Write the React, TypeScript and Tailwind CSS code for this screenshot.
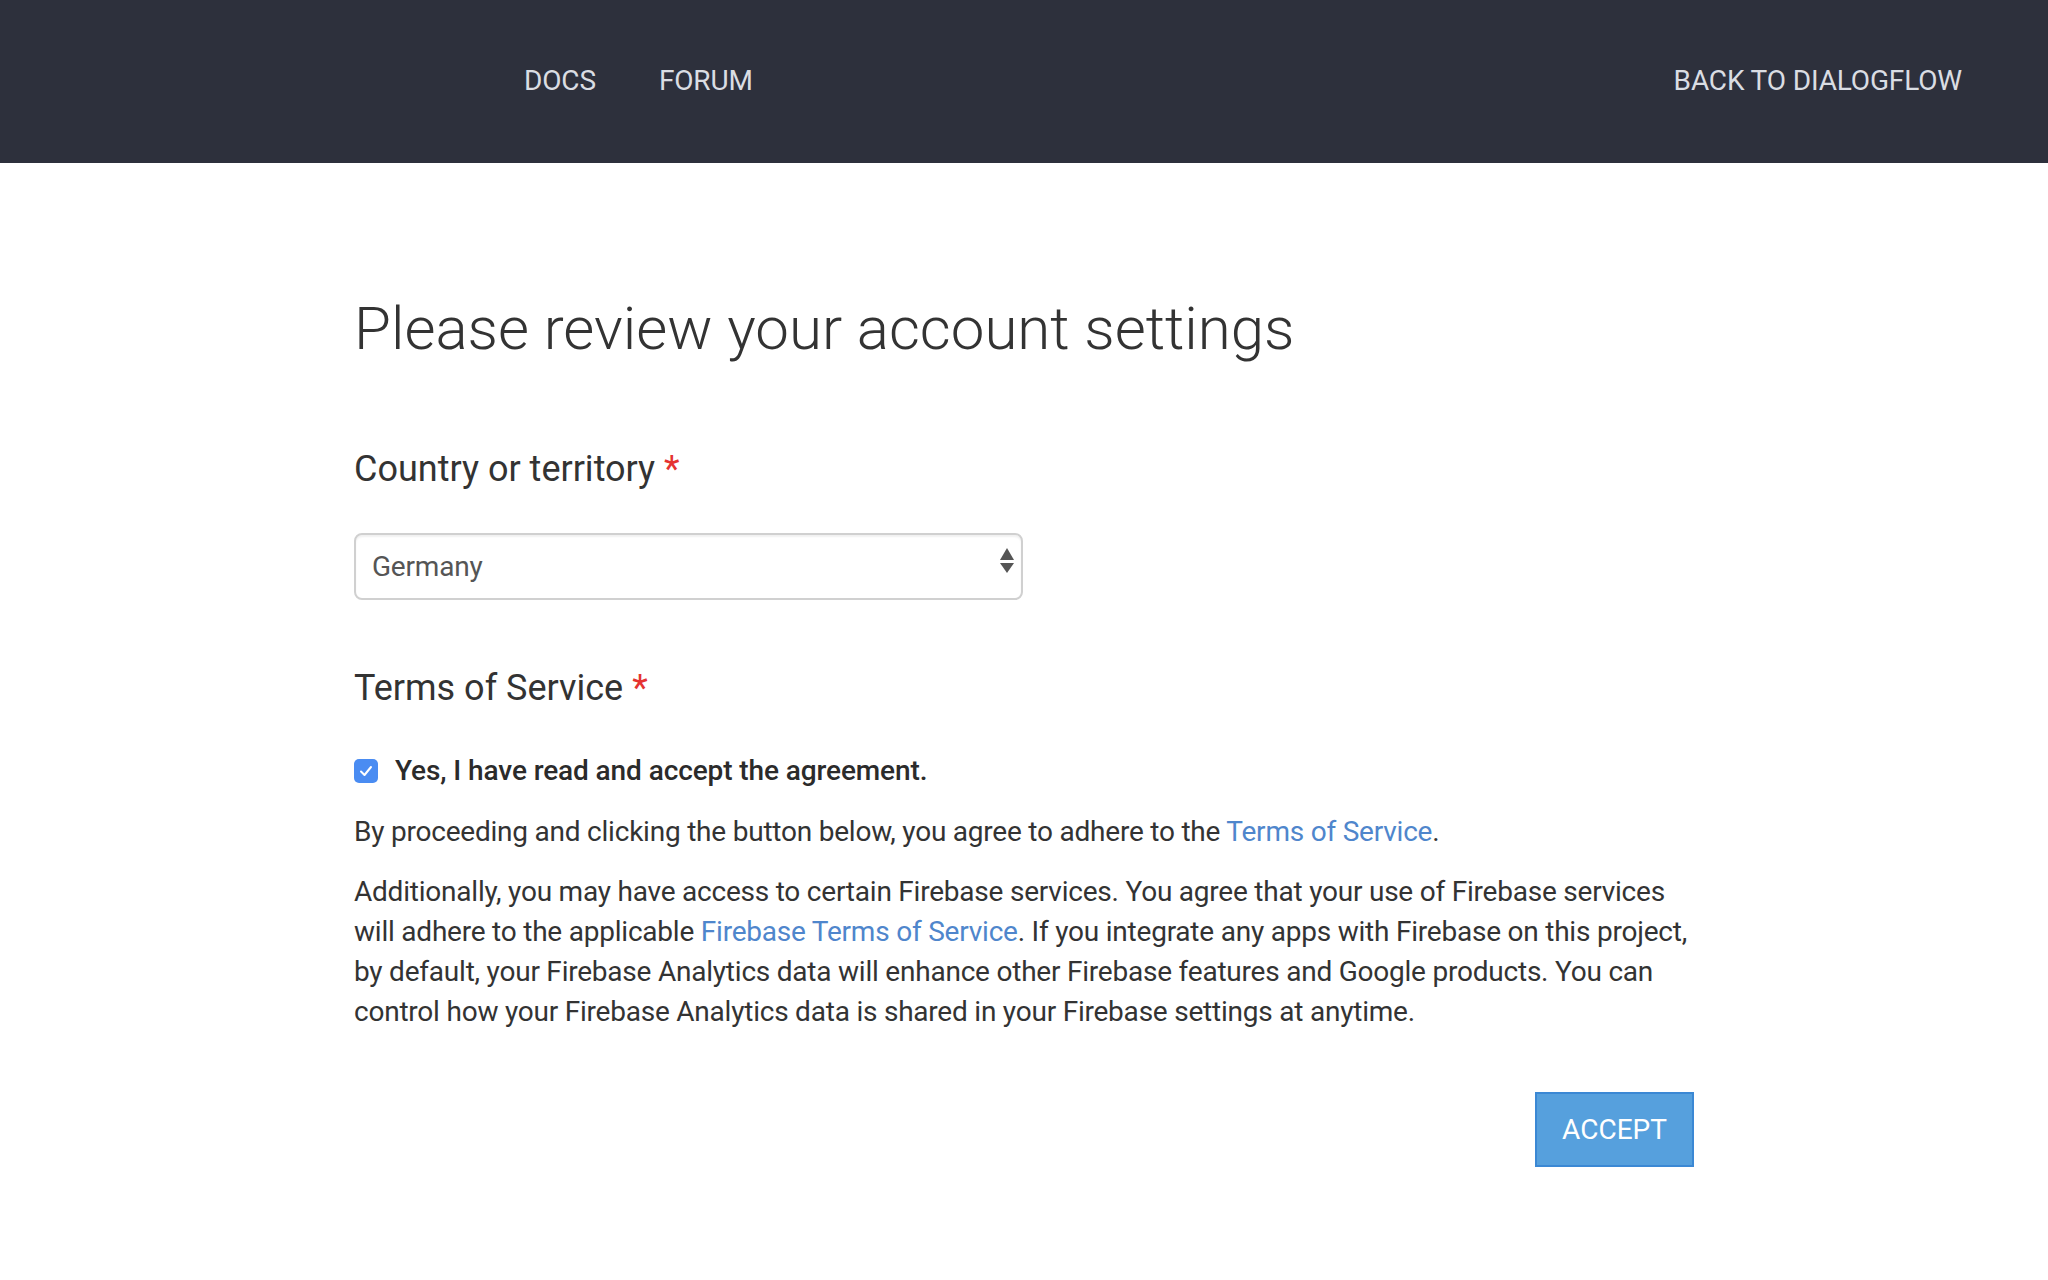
import React, { useState } from 'react';

export default function App() {
  const [country, setCountry] = useState('Germany');
  const [accepted, setAccepted] = useState(true);

  return (
    <div className="min-h-screen bg-white font-['Roboto','Liberation_Sans',sans-serif] text-[#333]">
      {/* Top bar */}
      <header className="flex h-[163px] items-center justify-between bg-[#2d303c] pb-[2px] pl-[524px] pr-[86px] text-[28px] tracking-[-0.15px] text-[#dadde3]">
        <nav className="flex gap-[63px]">
          <a href="#" className="hover:text-white">DOCS</a>
          <a href="#" className="hover:text-white">FORUM</a>
        </nav>
        <a href="#" className="hover:text-white">BACK TO DIALOGFLOW</a>
      </header>

      <main className="mx-auto flex w-[1340px] flex-col">
        <h1 className="mt-[133px] text-[60px] font-light leading-[66px] text-[#333]">
          Please review your account settings
        </h1>

        {/* Country */}
        <label className="mt-[87px] text-[36px] leading-[40px]">
          Country or territory <span className="text-[#e53331]">*</span>
        </label>
        <div className="relative mt-[44px] w-[669px]">
          <select
            value={country}
            onChange={(e) => setCountry(e.target.value)}
            className="h-[67px] w-full appearance-none rounded-[8px] border-2 border-[#d0d0d0] bg-white pl-[16px] text-[28px] tracking-[-0.2px] text-[#555] shadow-[inset_0_2px_2px_rgba(0,0,0,0.06)] outline-none"
          >
            <option>Germany</option>
            <option>France</option>
            <option>United States</option>
          </select>
          <svg
            className="pointer-events-none absolute right-[8px] top-[14px]"
            width="16"
            height="40"
            viewBox="0 0 16 40"
          >
            <path d="M8 1 L15 13 L1 13 Z" fill="#555" />
            <path d="M1 16 L15 16 L8 26 Z" fill="#555" />
          </svg>
        </div>

        {/* Terms */}
        <h2 className="mt-[68px] text-[36px] leading-[40px]">
          Terms of Service <span className="text-[#e53331]">*</span>
        </h2>
        <label className="mt-[43px] flex h-[40px] cursor-pointer items-center gap-[17px] text-[28px] font-medium tracking-[-0.1px] text-[#2b2b2b]">
          <span
            onClick={() => setAccepted(!accepted)}
            className={
              accepted
                ? 'flex h-[24px] w-[24px] items-center justify-center rounded-[5px] bg-[#4a8cf2]'
                : 'flex h-[24px] w-[24px] items-center justify-center rounded-[5px] border-2 border-[#999] bg-white'
            }
          >
            {accepted && (
              <svg width="14" height="14" viewBox="0 0 14 14">
                <path d="M2 7.5 L5.5 11 L12 3" fill="none" stroke="white" strokeWidth="2" strokeLinecap="round" strokeLinejoin="round" />
              </svg>
            )}
          </span>
          <span>Yes, I have read and accept the agreement.</span>
        </label>

        <p className="mt-[21px] text-[28px] leading-[40px] tracking-[-0.22px]">
          By proceeding and clicking the button below, you agree to adhere to the{' '}
          <a href="#" className="text-[#4f86cc]">Terms of Service</a>.
        </p>
        <p className="mt-[20px] text-[28px] leading-[40px] tracking-[-0.22px]">
          Additionally, you may have access to certain Firebase services. You agree that your use of Firebase services
          will adhere to the applicable <a href="#" className="text-[#4f86cc]">Firebase Terms of Service</a>. If you
          integrate any apps with Firebase on this project, by default, your Firebase Analytics data will enhance other
          Firebase features and Google products. You can control how your Firebase Analytics data is shared in your
          Firebase settings at anytime.
        </p>

        <div className="mt-[60px] flex justify-end">
          <button className="h-[75px] w-[159px] border-2 border-[#3b88d4] bg-[#56a0dd] text-[28px] text-white hover:bg-[#4a94d4]">
            ACCEPT
          </button>
        </div>
      </main>
    </div>
  );
}
